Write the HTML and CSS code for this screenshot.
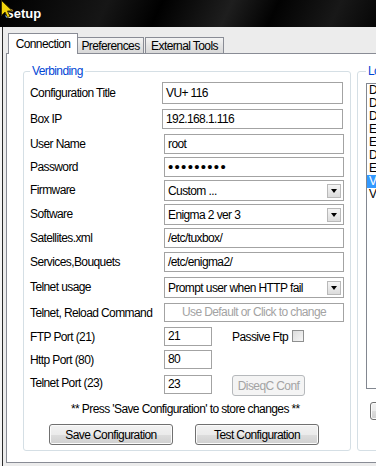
FILE: index.html
```html
<!DOCTYPE html>
<html lang="en">
<head>
  <meta charset="UTF-8" />
  <title>Setup</title>
  <link rel="stylesheet" href="styles.css">
</head>
<body>
  <div class="titlebar"><span class="title">Setup</span></div>
  <svg class="cursor" width="14" height="20" viewBox="0 0 14 20">
    <path d="M1.5 0.5 L1.5 15.5 L5 12 L7.5 17.5 L10 16.5 L7.5 11 L12.5 11 Z" fill="#f2d40c" stroke="#3b3300" stroke-width="1"/>
  </svg>

  <div class="frame">
    <div class="tabs">
      <div class="tab active">Connection</div>
      <div class="tab">Preferences</div>
      <div class="tab">External Tools</div>
    </div>

    <div class="panel">
      <fieldset class="group main">
        <legend>Verbinding</legend>
        <div class="form">
          <div class="label">Configuration Title</div>
          <div class="field wide tall">VU+ 116</div>

          <div class="label">Box IP</div>
          <div class="field wide">192.168.1.116</div>

          <div class="label">User Name</div>
          <div class="field">root</div>

          <div class="label">Password</div>
          <div class="field dots">•••••••••</div>

          <div class="label">Firmware</div>
          <div class="field select"><span>Custom ...</span><span class="arrow"></span></div>

          <div class="label">Software</div>
          <div class="field select"><span>Enigma 2 ver 3</span><span class="arrow"></span></div>

          <div class="label">Satellites.xml</div>
          <div class="field">/etc/tuxbox/</div>

          <div class="label">Services,Bouquets</div>
          <div class="field">/etc/enigma2/</div>

          <div class="label">Telnet usage</div>
          <div class="field select"><span>Prompt user when HTTP fail</span><span class="arrow"></span></div>

          <div class="label">Telnet, Reload Command</div>
          <div class="field hint">Use Default or Click to change</div>

          <div class="label">FTP Port (21)</div>
          <div class="port-line">
            <div class="field port">21</div>
            <div class="passive">Passive Ftp <span class="check"></span></div>
          </div>

          <div class="label">Http Port (80)</div>
          <div class="port-line">
            <div class="field port">80</div>
          </div>

          <div class="label">Telnet Port (23)</div>
          <div class="port-line">
            <div class="field port">23</div>
            <button class="btn disabled diseqc">DiseqC Conf</button>
          </div>
        </div>

        <p class="note">** Press 'Save Configuration' to store changes **</p>

        <div class="actions">
          <button class="btn wide-btn">Save Configuration</button>
          <button class="btn wide-btn">Test Configuration</button>
        </div>
      </fieldset>

      <fieldset class="group side">
        <legend>Lokale Instellingen</legend>
        <ul class="list">
          <li>Dreambox 500</li>
          <li>Dreambox 600</li>
          <li>Dreambox 800</li>
          <li>Edision</li>
          <li>Enigma</li>
          <li>Dgstation</li>
          <li>Edision 2</li>
          <li class="selected">VU+ 116</li>
          <li>VU+ Solo</li>
        </ul>
        <button class="btn side-btn">Verwijder</button>
      </fieldset>
    </div>
  </div>
</body>
</html>
```

FILE: styles.css
```css
body {
  margin: 0;
  width: 376px;
  height: 466px;
  overflow: hidden;
  background: #f4f4f4;
  font-family: "Liberation Sans", Arial, sans-serif;
  font-size: 12px;
  letter-spacing: -0.6px;
  color: #000;
  position: relative;
}
.titlebar {
  height: 27px;
  display: flex;
  align-items: center;
  padding-left: 5px;
  background: linear-gradient(115deg, #000 0%, #161616 28%, #000 42%, #1e1e1e 60%, #020202 72%, #181818 88%, #060606 100%);
}
.title {
  color: #fff;
  font-weight: bold;
  font-size: 13px;
  letter-spacing: 0;
}
.cursor {
  position: absolute;
  left: 0;
  top: 0;
}
.frame {
  margin-left: 2px;
  border-left: 1px solid #2b2b2b;
  background: #ececec;
  padding: 6px 0 3px 3px;
  height: 439px;
  box-sizing: border-box;
}
.tabs {
  display: flex;
  align-items: flex-end;
  height: 20px;
  padding-left: 2px;
}
.tab {
  box-sizing: border-box;
  height: 16px;
  line-height: 16px;
  border: 1px solid #898c95;
  border-bottom: none;
  background: linear-gradient(#f4f4f4, #e4e4e4 50%, #d8d8d8);
  text-align: center;
  white-space: nowrap;
}
.tab:nth-child(1) { width: 70px; }
.tab:nth-child(2) { width: 66px; border-left: none; }
.tab:nth-child(3) { width: 79px; margin-left: 1px; }
.tab.active {
  height: 21px;
  line-height: 20px;
  margin-bottom: -1px;
  background: #fff;
  position: relative;
  z-index: 1;
}
.panel {
  box-sizing: border-box;
  width: 600px;
  height: 410px;
  background: #fff;
  border: 1px solid #898c95;
  padding: 10px 0 0 16px;
  display: flex;
  gap: 6px;
}
.group {
  flex: none;
  margin: 0;
  min-width: 0;
  box-sizing: border-box;
  height: 387px;
  border: 1px solid #d5dfe5;
  border-radius: 3px;
  padding: 4px 6px;
}
.group legend {
  padding: 0 2px;
  color: #0046d5;
  line-height: 14px;
  white-space: nowrap;
}
.main { width: 328px; }
.side {
  width: 200px;
  padding: 5px 8px;
}
.form {
  display: grid;
  grid-template-columns: 134px 180px;
  grid-template-rows: 27px 25px 23px 23px 24px 24px 24px 25px 26px 24px 23px 23px 22px;
  align-items: start;
}
.label {
  line-height: 20px;
  white-space: nowrap;
}
.form .label:first-child { line-height: 22px; }
.field {
  box-sizing: border-box;
  height: 20px;
  line-height: 18px;
  border: 1px solid #a3a3a3;
  background: #fff;
  padding-left: 3px;
  white-space: nowrap;
  overflow: hidden;
}
.field.wide {
  width: 181px;
  margin-left: -2px;
}
.field.tall {
  height: 22px;
  line-height: 20px;
}
.dots {
  font-size: 15px;
  letter-spacing: 1.3px;
  line-height: 17px;
}
.select {
  display: flex;
  justify-content: space-between;
  align-items: center;
  height: 21px;
  padding-right: 2px;
}
.arrow {
  box-sizing: border-box;
  width: 14px;
  height: 14px;
  border: 1px solid #b9b9b9;
  background: linear-gradient(#f5f5f5, #dcdcdc);
  display: flex;
  align-items: center;
  justify-content: center;
}
.arrow::after {
  content: "";
  border-left: 3.5px solid transparent;
  border-right: 3.5px solid transparent;
  border-top: 4px solid #000;
}
.hint {
  color: #a3a3a3;
  text-align: center;
  padding-left: 0;
  height: 19px;
  line-height: 17px;
}
.port-line {
  display: flex;
  align-items: center;
}
.field.port {
  width: 48px;
  height: 19px;
  line-height: 17px;
}
.passive {
  margin-left: 20px;
  display: flex;
  align-items: center;
  gap: 4px;
  white-space: nowrap;
}
.check {
  box-sizing: border-box;
  width: 12px;
  height: 12px;
  border: 1px solid #8e8f8f;
  background: linear-gradient(135deg, #dcdcdc, #f6f6f6);
  margin-top: -1px;
}
.btn {
  box-sizing: border-box;
  font-family: inherit;
  font-size: 12px;
  letter-spacing: -0.6px;
  color: #000;
  border: 1px solid #707070;
  border-radius: 3px;
  background: linear-gradient(#f2f2f2 0%, #ebebeb 50%, #dddddd 51%, #cfcfcf 100%);
  box-shadow: inset 0 0 0 1px #fbfbfb;
  padding: 0;
  white-space: nowrap;
}
.btn.disabled {
  color: #a3a3a3;
  border-color: #b6b9bc;
  background: #f4f4f4;
  box-shadow: none;
}
.diseqc {
  margin-left: 20px;
  margin-top: 2px;
  width: 73px;
  height: 21px;
}
.note {
  margin: 7px 0 0 41px;
  line-height: 14px;
  white-space: nowrap;
}
.actions {
  margin-top: 8px;
  padding-left: 19px;
  display: flex;
  gap: 22px;
}
.wide-btn {
  width: 124px;
  height: 21px;
}
.list {
  list-style: none;
  margin: 0;
  padding: 0;
  box-sizing: border-box;
  height: 306px;
  border: 1px solid #828790;
  background: #fff;
}
.list li {
  line-height: 13px;
  padding-left: 2px;
  white-space: nowrap;
}
.list .selected {
  background: #3399ff;
  color: #fff;
}
.side-btn {
  margin: 13px 0 0 4px;
  width: 90px;
  height: 18px;
}
```
